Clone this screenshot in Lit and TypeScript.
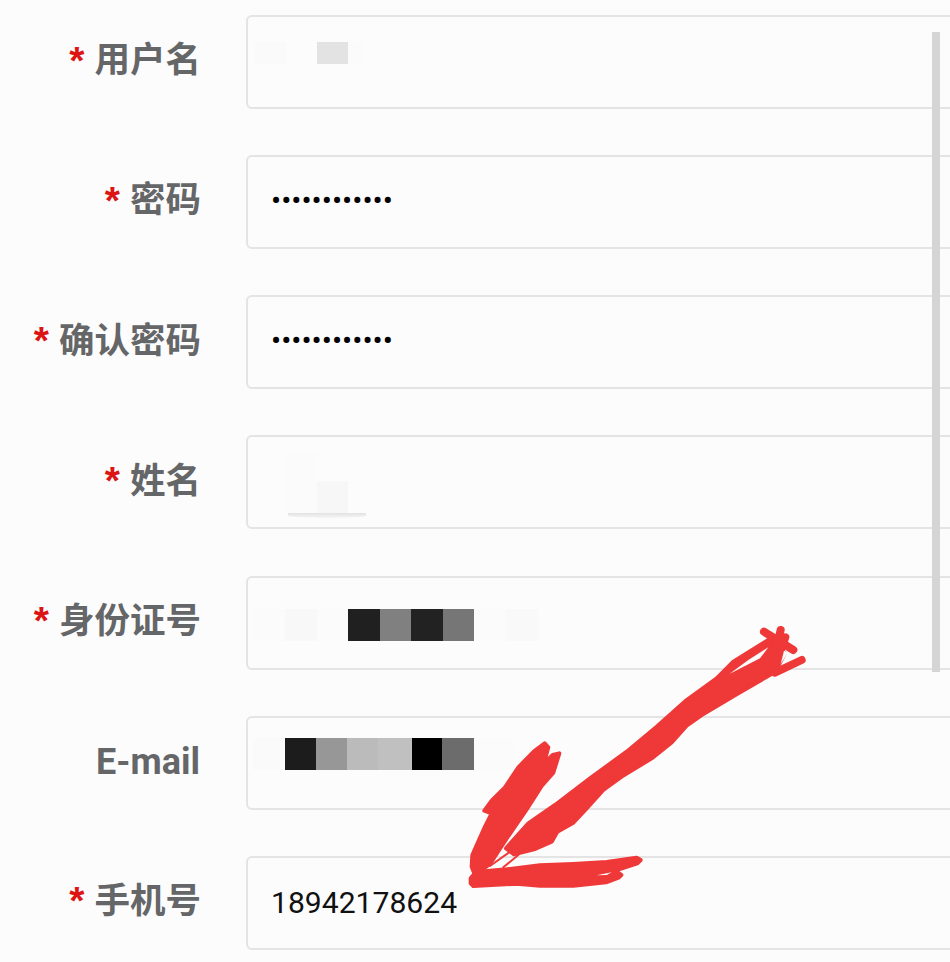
import { LitElement, html, css, svg } from "lit";
import { customElement } from "lit/decorators.js";

type Block = { w: number; c: string; h: number; t?: number };
type Row = { label: string; req: boolean; type: "mosaic" | "password" | "text"; value?: string; pad?: number; top?: number; smudge?: boolean; blocks?: Block[] };

const rows: Row[] = [
  { label: "用户名", req: true, type: "mosaic", pad: 7, top: 25, blocks: [
    { w: 31, c: "#fafafa", h: 22 }, { w: 31, c: "#fdfcfd", h: 22 }, { w: 31, c: "#e3e3e3", h: 22 }, { w: 16, c: "#fbfbfb", h: 22 } ] },
  { label: "密码", req: true, type: "password", value: "123456789012" },
  { label: "确认密码", req: true, type: "password", value: "123456789012" },
  { label: "姓名", req: true, type: "mosaic", pad: 38, top: 16, smudge: true, blocks: [
    { w: 31, c: "#fcfbfc", h: 60 }, { w: 31, c: "#f7f7f7", h: 32, t: 28 } ] },
  { label: "身份证号", req: true, type: "mosaic", pad: 6, top: 31, blocks: [
    { w: 31, c: "#fbfbfb", h: 32 }, { w: 32, c: "#f8f8f8", h: 32 }, { w: 31, c: "#fbfbfb", h: 32 },
    { w: 32, c: "#202020", h: 32 }, { w: 31, c: "#808080", h: 32 }, { w: 32, c: "#222222", h: 32 }, { w: 31, c: "#767676", h: 32 },
    { w: 32, c: "#fbfbfb", h: 32 }, { w: 32, c: "#f9f9f9", h: 32 } ] },
  { label: "E-mail", req: false, type: "mosaic", pad: 5, top: 20, blocks: [
    { w: 32, c: "#fafafa", h: 32 }, { w: 31, c: "#1c1c1c", h: 32 }, { w: 31, c: "#979797", h: 32 }, { w: 31, c: "#bbbbbb", h: 32 },
    { w: 34, c: "#c0c0c0", h: 32 }, { w: 30, c: "#000000", h: 32 }, { w: 32, c: "#6c6c6c", h: 32 }, { w: 40, c: "#fcfbfc", h: 32 } ] },
  { label: "手机号", req: true, type: "text", value: "18942178624" },
];

const arrow = svg`
  <svg class="scribble" viewBox="0 0 950 962" aria-hidden="true">
    <g transform="translate(440 610) scale(0.33333)" fill="#ef3838" stroke="#ef3838" stroke-linejoin="round" stroke-linecap="round">
      <path stroke-width="12" d="M198 715L265 640L345 585L450 505L560 425L650 350L740 270L830 205L880 155L985 90L1035 130L1005 186L895 250L785 315L740 347L695 397L635 445L545 500L490 540L440 595L400 638L352 665L335 695L282 718L222 733Z"/>
      <path stroke-width="12" d="M95 770L97 735L135 650L155 610L133 602L155 572L195 532L235 472L282 424L314 400L325 412L312 460L338 435L358 430L340 488L305 528L260 598L205 678L150 762L105 795Z"/>
      <path stroke-width="12" d="M92 805L108 786L200 778L300 766L400 762L500 756L590 743L602 750L592 760L525 782L544 795L536 803L498 817L400 827L300 827L230 821L100 828L92 820Z"/>
      <path stroke-width="6" fill="none" d="M150 768L215 722M190 772L235 735"/>
      <g fill="none" stroke-width="24">
        <path d="M972 65L1060 120"/>
        <path d="M1022 60L1010 110"/>
        <path d="M1036 82L1020 130"/>
        <path d="M1085 150L1005 188"/>
      </g>
      <path stroke="none" fill="#fdfcfd" d="M868 192L925 150L985 112L960 145Z"/>
      <path stroke="none" fill="#fdfcfd" d="M1032 122L1044 128L1022 162Z"/>
      <path stroke="none" fill="#fdfcfd" d="M470 796L515 787L500 795Z"/>
    </g>
  </svg>`;

@customElement("app-root")
export class AppRoot extends LitElement {
  static styles = css`
    :host {
      display: block;
      position: relative;
      width: 950px;
      height: 962px;
      overflow: hidden;
      background: #fdfcfd;
      font-family: "Noto Sans CJK SC", Roboto, sans-serif;
    }
    .form {
      display: flex;
      flex-direction: column;
      gap: 46.15px;
      padding-top: 15px;
    }
    .row {
      display: flex;
      align-items: center;
      gap: 45px;
    }
    .label {
      flex: 0 0 201px;
      display: flex;
      justify-content: flex-end;
      align-items: center;
      height: 84px;
      margin-top: -10px;
      font-size: 35.5px;
      font-weight: 700;
      color: #646668;
      white-space: nowrap;
      line-height: 1;
    }
    .label.latin {
      font-family: Roboto, sans-serif;
      font-size: 36px;
      margin-top: -2px;
      padding-right: 1px;
      box-sizing: border-box;
    }
    .star {
      color: #dc1414;
      font-family: "Liberation Sans", sans-serif;
      font-weight: 700;
      font-size: 39px;
      margin-right: 10px;
      transform: translateY(3px);
    }
    .field {
      position: relative;
      box-sizing: border-box;
      flex: 0 0 724px;
      height: 94px;
      border: 2px solid #e4e4e4;
      border-radius: 6px;
      background: #fdfcfd;
      overflow: hidden;
    }
    input {
      display: block;
      box-sizing: border-box;
      width: 100%;
      height: 100%;
      border: 0;
      outline: 0;
      background: transparent;
      padding: 0 23px;
      font-family: Roboto, sans-serif;
      font-size: 30.1px;
      color: #111;
    }
    input[type="password"] {
      padding-bottom: 4px;
      color: #000;
    }
    .mosaic {
      display: flex;
      align-items: flex-start;
    }
    .smudge {
      position: absolute;
      left: 40px;
      top: 76px;
      width: 78px;
      height: 5px;
      border-radius: 0 0 50% 50%;
      background: linear-gradient(#e2e2e2, #f6f6f6);
    }
    .scrollbar {
      position: absolute;
      left: 932px;
      top: 32px;
      width: 8px;
      height: 640px;
      background: #d6d5d6;
    }
    .scribble {
      position: absolute;
      inset: 0;
      width: 950px;
      height: 962px;
      pointer-events: none;
    }
  `;

  private control(r: Row) {
    if (r.type === "mosaic") {
      return html`<div class="mosaic" style="padding:${r.top}px 0 0 ${r.pad}px">
        ${r.blocks!.map((b) => html`<span style="width:${b.w}px;height:${b.h}px;margin-top:${b.t ?? 0}px;background:${b.c}"></span>`)}
      </div>
      ${r.smudge ? html`<span class="smudge"></span>` : ""}`;
    }
    return html`<input type=${r.type} .value=${r.value ?? ""} readonly />`;
  }

  render() {
    return html`
      <div class="form">
        ${rows.map(
          (r) => html`<div class="row">
            <label class="label ${r.req ? "" : "latin"}">${r.req ? html`<span class="star">*</span>` : ""}${r.label}</label>
            <div class="field">${this.control(r)}</div>
          </div>`
        )}
      </div>
      <div class="scrollbar"></div>
      ${arrow}
    `;
  }
}
